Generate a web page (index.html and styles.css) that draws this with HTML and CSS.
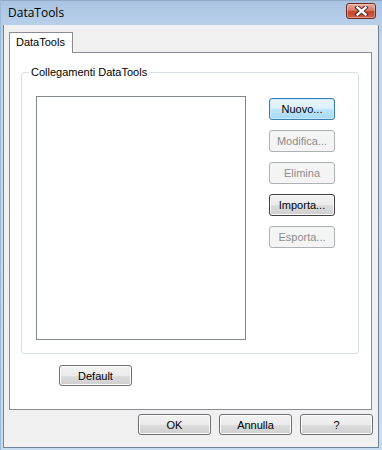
FILE: index.html
```html
<!DOCTYPE html>
<html>
<head>
<meta charset="utf-8">
<link rel="stylesheet" href="styles.css">
</head>
<body>
<div class="window">
  <div class="titlebar">
    <span class="title">DataTools</span>
    <div class="close">
      <svg width="17" height="10" viewBox="0 0 17 10">
        <path d="M4.5 1.5 L12.5 8.5 M12.5 1.5 L4.5 8.5" stroke="#4a1f1a" stroke-width="4.2" stroke-linecap="square"/>
        <path d="M4.5 1.5 L12.5 8.5 M12.5 1.5 L4.5 8.5" stroke="#ffffff" stroke-width="2.4" stroke-linecap="square"/>
      </svg>
    </div>
  </div>
  <div class="client">
    <div class="tabs">
      <div class="tab">DataTools</div>
    </div>
    <div class="panel">
      <div class="group">
        <span class="legend">Collegamenti DataTools</span>
        <div class="listbox"></div>
        <div class="side">
          <button class="btn btn-default">Nuovo...</button>
          <button class="btn" disabled>Modifica...</button>
          <button class="btn" disabled>Elimina</button>
          <button class="btn btn-dark">Importa...</button>
          <button class="btn" disabled>Esporta...</button>
        </div>
      </div>
      <div class="default-row">
        <button class="btn btn-wide">Default</button>
      </div>
    </div>
    <div class="footer">
      <button class="btn btn-wide">OK</button>
      <button class="btn btn-wide">Annulla</button>
      <button class="btn btn-wide">?</button>
    </div>
  </div>
</div>
</body>
</html>
```

FILE: styles.css
```css
* { box-sizing: border-box; }
html, body { margin: 0; padding: 0; }
body {
  width: 382px;
  height: 450px;
  overflow: hidden;
  font-family: "Liberation Sans", Arial, sans-serif;
  font-size: 11px;
  color: #000;
}
.window {
  width: 382px;
  height: 450px;
  background: linear-gradient(#a9c4e2, #c2d7ee 40px, #c8dcf1);
  padding: 0 3px 2px 2px;
  display: flex;
  flex-direction: column;
  border-left: 1px solid #9fb8d4;
  border-top: 1px solid #8ea8c6;
}
.titlebar {
  height: 24px;
  flex: none;
  display: flex;
  align-items: center;
  justify-content: space-between;
  padding-left: 5px;
  padding-right: 3px;
}
.title {
  font-family: "Open Sans", "Noto Sans", sans-serif;
  font-size: 12px;
  color: #000;
  margin-top: -2px;
}
.close {
  width: 30px;
  height: 16px;
  margin-top: -5px;
  border: 1px solid #6b2b22;
  border-radius: 3px;
  background: linear-gradient(#e8a89b, #d67a67 45%, #c5432d 55%, #d0604a);
  display: flex;
  align-items: center;
  justify-content: center;
  box-shadow: inset 0 0 0 1px rgba(255,255,255,0.35);
}
.close svg { display: block; }
.client {
  flex: 1;
  background: #f0f0f0;
  border: 1px solid #6f8298;
  border-top: none;
  padding: 7px 5px 0 5px;
  display: flex;
  flex-direction: column;
}
.tabs {
  display: flex;
  height: 20px;
  position: relative;
  z-index: 1;
}
.tab {
  width: 64px;
  height: 21px;
  background: #fff;
  border: 1px solid #898c95;
  border-bottom: none;
  padding: 3px 0 0 6px;
}
.panel {
  width: 363px;
  height: 358px;
  background: #fff;
  border: 1px solid #898c95;
  padding: 19px 12px 0 11px;
  display: flex;
  flex-direction: column;
}
.group {
  position: relative;
  width: 338px;
  height: 282px;
  border: 1px solid #d5dfe5;
  border-radius: 3px;
  padding: 23px 0 0 14px;
  display: flex;
  gap: 23px;
}
.legend {
  position: absolute;
  top: -8px;
  left: 7px;
  background: #fff;
  padding: 0 2px;
  line-height: 14px;
}
.listbox {
  width: 210px;
  height: 244px;
  border: 1px solid #828790;
  background: #fff;
}
.side {
  display: flex;
  flex-direction: column;
  gap: 10px;
  padding-top: 2px;
}
.btn {
  font-family: "Liberation Sans", Arial, sans-serif;
  font-size: 11px;
  color: #000;
  width: 66px;
  height: 22px;
  padding: 0;
  margin: 0;
  border: 1px solid #707070;
  border-radius: 3px;
  background: linear-gradient(#f2f2f2, #ebebeb 50%, #dddddd 50%, #cfcfcf);
  box-shadow: inset 0 0 0 1px #fcfcfc;
}
.btn:disabled {
  color: #8d8d8d;
  border-color: #adb2b5;
  background: #f4f4f4;
  box-shadow: none;
}
.btn-default {
  border-color: #3c7fb1;
  background: linear-gradient(#eaf6fd, #d9f0fc 50%, #bee6fd 50%, #a7d9f5);
  box-shadow: inset 0 0 0 1px #c6e7f9;
}
.btn-dark {
  border-color: #404040;
}
.btn-wide {
  width: 73px;
  height: 21px;
}
.default-row {
  padding: 11px 0 0 38px;
}
.footer {
  display: flex;
  justify-content: flex-end;
  gap: 8px;
  padding: 4px 0 0 0;
}
```
